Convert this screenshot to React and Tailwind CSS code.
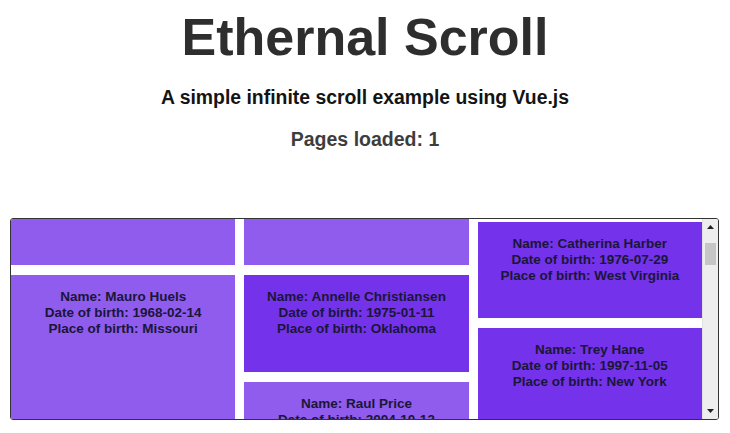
import { useLayoutEffect, useRef } from 'react';

const columns = [
  [
    { h: 'h-[100px]', tone: 'light' },
    { name: 'Mauro Huels', dob: '1968-02-14', pob: 'Missouri', h: 'h-[190px]', tone: 'light' },
  ],
  [
    { h: 'h-[100px]', tone: 'light' },
    { name: 'Annelle Christiansen', dob: '1975-01-11', pob: 'Oklahoma', h: 'h-[97px]', tone: 'dark' },
    { name: 'Raul Price', dob: '2004-10-13', pob: 'Iowa', h: 'h-[130px]', tone: 'light' },
  ],
  [
    { h: 'h-[47px]', tone: 'dark' },
    { name: 'Catherina Harber', dob: '1976-07-29', pob: 'West Virginia', h: 'h-[96px]', tone: 'dark' },
    { name: 'Trey Hane', dob: '1997-11-05', pob: 'New York', h: 'h-[160px]', tone: 'dark' },
  ],
];

const Card = ({ c }) => (
  <div className={`${c.h} shrink-0 pt-[14px] text-center text-[13.5px] leading-4 font-bold text-[#1a1638] ${c.tone === 'dark' ? 'bg-[#7433ea]' : 'bg-[#8f5ced]'}`}>
    {c.name && (
      <>
        <div>Name: {c.name}</div>
        <div>Date of birth: {c.dob}</div>
        <div>Place of birth: {c.pob}</div>
      </>
    )}
  </div>
);

// classic scrollbar, drawn since the headless one is an overlay
const ScrollBar = () => (
  <div className="w-[16px] shrink-0 flex flex-col bg-[#eeeeee] border-l border-[#e2e2e2]">
    <div className="h-[16px] flex items-center justify-center">
      <svg width="7" height="4" viewBox="0 0 7 4"><path d="M3.5 0 L7 4 L0 4 Z" fill="#222" /></svg>
    </div>
    <div className="flex-1 pt-[8px]">
      <div className="mx-[2px] h-[22px] bg-[#c6c6c6]" />
    </div>
    <div className="h-[16px] flex items-center justify-center">
      <svg width="7" height="4" viewBox="0 0 7 4"><path d="M0 0 L7 0 L3.5 4 Z" fill="#222" /></svg>
    </div>
  </div>
);

export default function App() {
  const box = useRef(null);

  useLayoutEffect(() => {
    if (box.current) box.current.scrollTop = 54;
  }, []);

  return (
    <div className="w-[730px] h-[433px] bg-white overflow-hidden font-['Liberation_Sans',Arial,sans-serif]">
      <h1 className="pt-[7px] text-center text-[52px] leading-[60px] font-bold text-[#2e2e2e]">Ethernal Scroll</h1>
      <h2 className="mt-[18px] text-center text-[19.4px] leading-6 font-bold text-[#141414]">A simple infinite scroll example using Vue.js</h2>
      <p className="mt-[18px] text-center text-[19.5px] leading-6 font-bold text-[#3d3d3d]">Pages loaded: 1</p>

      <div className="mt-[67px] ml-[10px] w-[709px] h-[202px] flex border border-[#333] rounded-[3px] overflow-hidden">
        <div ref={box} className="flex-1 overflow-hidden">
          <div className="grid grid-cols-3 gap-x-[9px]">
            {columns.map((col, i) => (
              <div key={i} className="flex flex-col gap-[10px]">
                {col.map((c, j) => <Card key={j} c={c} />)}
              </div>
            ))}
          </div>
        </div>
        <ScrollBar />
      </div>
    </div>
  );
}
